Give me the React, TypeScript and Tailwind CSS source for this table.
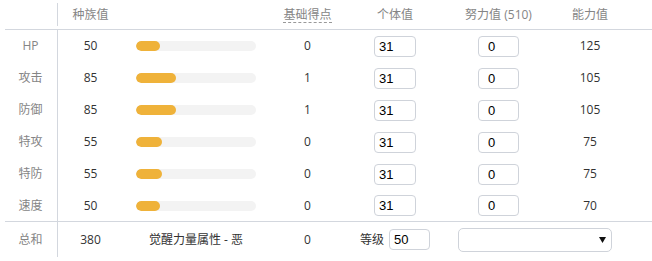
const stats = [
  { label: 'HP', base: 50, ev: 0, iv: 31, effort: 0, value: 125 },
  { label: '攻击', base: 85, ev: 1, iv: 31, effort: 0, value: 105 },
  { label: '防御', base: 85, ev: 1, iv: 31, effort: 0, value: 105 },
  { label: '特攻', base: 55, ev: 0, iv: 31, effort: 0, value: 75 },
  { label: '特防', base: 55, ev: 0, iv: 31, effort: 0, value: 75 },
  { label: '速度', base: 50, ev: 0, iv: 31, effort: 0, value: 70 },
]

const cols = 'grid grid-cols-[53px_65px_146px_77px_98px_109px_74px] items-center'

function NumInput({ value, className = '' }: { value: number; className?: string }) {
  return (
    <input
      type="text"
      defaultValue={value}
      className={`h-[21px] rounded-[4px] border border-[#cfd3da] bg-white px-[4px] font-['Liberation_Sans',Arial,sans-serif] text-[13px] text-black outline-none ${className}`}
    />
  )
}

export default function App() {
  return (
    <div className="h-[261px] w-[652px] bg-white pl-[5px] pt-[3px] font-['Open_Sans','Noto_Sans_CJK_SC',sans-serif] text-[12px] text-[#333]">
      <div className={`${cols} h-[27px] border-b border-[#d3d7de] pb-[3px] text-[#858585]`}>
        <div className="h-full border-r border-[#d3d7de]" />
        <div className="text-center">种族值</div>
        <div />
        <div className="flex justify-center">
          <span className="border-b border-dashed border-[#999] leading-[15px]">基础得点</span>
        </div>
        <div className="text-center">个体值</div>
        <div className="text-center">努力值 (510)</div>
        <div className="text-center">能力值</div>
      </div>

      {stats.map((s, i) => (
        <div key={s.label} className={`${cols} h-[32px] ${i === stats.length - 1 ? 'border-b border-[#d3d7de]' : ''}`}>
          <div className="flex h-full items-center justify-center border-r border-[#d3d7de] pr-[1px] text-[#858585]">
            {s.label}
          </div>
          <div className="text-center">{s.base}</div>
          <div className="pl-[13px]">
            <div className="h-[10px] w-[120px] overflow-hidden rounded-full bg-[#f3f3f3]">
              <div className="h-full rounded-full bg-[#efb23a]" style={{ width: `${(s.base / 255) * 100}%` }} />
            </div>
          </div>
          <div className="text-center">{s.ev}</div>
          <div className="flex justify-center">
            <NumInput value={s.iv} className="w-[42px]" />
          </div>
          <div className="flex justify-center">
            <NumInput value={s.effort} className="w-[41px] pl-[9px]" />
          </div>
          <div className="text-center">{s.value}</div>
        </div>
      ))}

      <div className={`${cols} h-[35px]`}>
        <div className="flex h-full items-center justify-center border-r border-[#d3d7de] pr-[1px] text-[#858585]">
          总和
        </div>
        <div className="text-center">380</div>
        <div className="text-center">觉醒力量属性 - 恶</div>
        <div className="text-center">0</div>
        <div className="flex items-center justify-center gap-[5px]">
          <span>等级</span>
          <NumInput value={50} className="w-[41px]" />
        </div>
        <div className="col-span-2 flex justify-center pr-[1px]">
          <div className="flex h-[24px] w-[154px] items-center justify-end rounded-[5px] border border-[#cfd3da] bg-white pr-[5px]">
            <svg width="7" height="6" viewBox="0 0 7 6">
              <path d="M0 0H7L3.5 6Z" fill="#111" />
            </svg>
          </div>
        </div>
      </div>
    </div>
  )
}
